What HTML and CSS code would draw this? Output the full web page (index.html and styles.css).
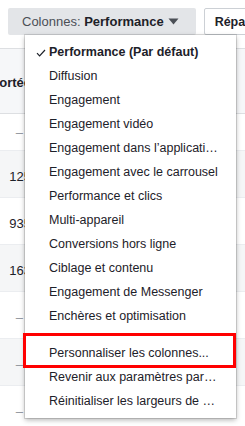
FILE: index.html
```html
<!DOCTYPE html>
<html lang="fr">

<head>
    <meta charset="UTF-8">
    <meta name="viewport" content="width=device-width, initial-scale=1.0">
    <title>Colonnes</title>
    <link rel="stylesheet" href="styles.css">
</head>

<body>
    <div class="toolbar">
        <div class="columns-picker">
            <button class="columns-btn">
                Colonnes:&nbsp;<b>Performance</b>
                <svg class="caret" width="11" height="7" viewBox="0 0 11 7">
                    <path d="M0.5 0.5 L10.5 0.5 L5.5 6.5 Z" fill="#4b4f56" />
                </svg>
            </button>

            <!-- Columns dropdown -->
            <div class="columns-menu">
                <div class="menu-item is-selected">
                    <svg class="check" width="10" height="8" viewBox="0 0 10 8">
                        <path d="M1 4.2 L3.6 6.8 L9 1" fill="none" stroke="#1d2129" stroke-width="1.2" />
                    </svg>
                    Performance (Par défaut)
                </div>
                <div class="menu-item">Diffusion</div>
                <div class="menu-item">Engagement</div>
                <div class="menu-item">Engagement vidéo</div>
                <div class="menu-item">Engagement dans l’application</div>
                <div class="menu-item">Engagement avec le carrousel</div>
                <div class="menu-item">Performance et clics</div>
                <div class="menu-item">Multi-appareil</div>
                <div class="menu-item">Conversions hors ligne</div>
                <div class="menu-item">Ciblage et contenu</div>
                <div class="menu-item">Engagement de Messenger</div>
                <div class="menu-item">Enchères et optimisation</div>
                <div class="menu-divider"></div>
                <div class="menu-item is-marked">Personnaliser les colonnes...</div>
                <div class="menu-item">Revenir aux paramètres par défaut</div>
                <div class="menu-item">Réinitialiser les largeurs de colonnes</div>
            </div>
        </div>
        <button class="split-btn">Répartition</button>
    </div>

    <!-- Stats table behind the menu -->
    <div class="stats">
        <div class="stats-head"><div class="cell"><b>Portée</b></div></div>
        <div class="stats-row first"><div class="cell"><span class="empty">–</span></div></div>
        <div class="stats-row alt"><div class="cell">125</div></div>
        <div class="stats-row"><div class="cell">935</div></div>
        <div class="stats-row alt"><div class="cell">163</div></div>
        <div class="stats-row"><div class="cell"><span class="empty">–</span></div></div>
        <div class="stats-row alt"><div class="cell"><span class="empty">–</span></div></div>
        <div class="stats-row"><div class="cell"><span class="empty">–</span></div></div>
    </div>
</body>

</html>
```

FILE: styles.css
```css
body {
    font-family: 'Liberation Sans', Arial, sans-serif;
    font-size: 13px;
    color: #1d2129;
    background-color: #fff;
    margin: 0;
    overflow: hidden;
}

.toolbar {
    display: flex;
    gap: 8px;
    padding: 8px 0 0 8px;
    white-space: nowrap;
}

.columns-picker {
    position: relative;
}

.columns-btn {
    display: flex;
    align-items: center;
    height: 27px;
    padding: 0 17px 0 14px;
    background-color: #e3e5e8;
    border: none;
    border-radius: 2px;
    font-family: inherit;
    font-size: 13px;
    color: #4b4f56;
}

.columns-btn b {
    color: #1d2129;
}

.caret {
    margin-left: 4px;
}

.split-btn {
    height: 27px;
    padding: 0 10px;
    background-color: #fff;
    border: 1px solid #ccd0d5;
    border-radius: 2px;
    font-family: inherit;
    font-size: 12.5px;
    font-weight: bold;
    color: #1d2129;
}

/* Dropdown */
.columns-menu {
    position: absolute;
    top: 100%;
    left: 17px;
    width: 211px;
    padding: 5px 0;
    background-color: #fff;
    box-shadow: 0 0 0 1px rgba(0, 0, 0, 0.12), 0 2px 5px rgba(0, 0, 0, 0.3);
    z-index: 2;
}

.menu-item {
    position: relative;
    height: 24px;
    line-height: 24px;
    padding: 0 18px 0 24px;
    font-size: 12.5px;
    overflow: hidden;
    text-overflow: ellipsis;
    white-space: nowrap;
}

.menu-item.is-selected {
    font-weight: bold;
}

.check {
    position: absolute;
    left: 11px;
    top: 9px;
}

.menu-divider {
    height: 1px;
    margin: 6px 0;
    background-color: #dddfe2;
}

.menu-item.is-marked {
    overflow: visible;
}

.menu-item.is-marked::after {
    content: "";
    position: absolute;
    left: -2px;
    right: 0;
    top: -8px;
    bottom: -3px;
    border: 3px solid #f00;
}

/* Table */
.stats {
    margin-top: 13px;
}

.stats-head {
    display: flex;
    align-items: center;
    height: 62px;
    padding-top: 2px;
    background-color: #f6f7f9;
    border-top: 1px solid #dddfe2;
    border-bottom: 1px solid #dddfe2;
}

.stats-row {
    display: flex;
    align-items: center;
    height: 47px;
    padding-top: 4px;
    box-sizing: border-box;
    border-bottom: 1px solid #ebedf0;
}

.stats-row.first {
    height: 37px;
    padding-top: 0;
}

.stats-row.alt {
    background-color: #f5f6f7;
}

.cell {
    display: flex;
    justify-content: flex-end;
    width: 31px;
    white-space: nowrap;
}

.empty {
    margin-right: 8px;
    color: #90949c;
}
```
